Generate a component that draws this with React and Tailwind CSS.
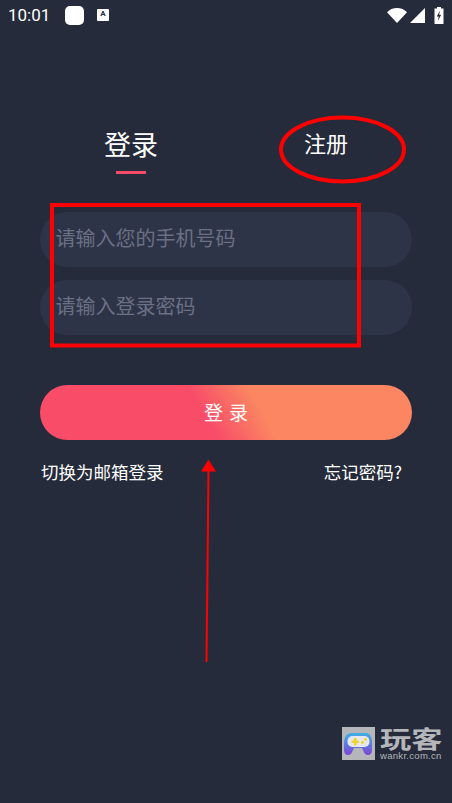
const cjk = { fontFamily: '"Noto Sans CJK SC", "Noto Sans", sans-serif' };

function StatusBar() {
  return (
    <div className="flex h-[30px] items-center justify-between pl-2 pr-2 text-white">
      <div className="flex items-center">
        <span className="w-[43px] text-[17px] leading-none" style={{ fontFamily: 'Roboto, sans-serif' }}>10:01</span>
        <div className="ml-[14px] h-[19px] w-[19px] rounded-[5px] bg-white" />
        <div className="ml-[13px] flex h-3 w-3 items-start justify-center rounded-[1px] bg-white">
          <span className="text-[8px] font-bold leading-[10px] text-[#252b3a]" style={{ fontFamily: 'Roboto, sans-serif' }}>A</span>
        </div>
      </div>
      <div className="flex items-center">
        <svg width="20" height="15" viewBox="0 0 20 15"><path d="M0 4.200C2.600 1.600 6 0 10 0s7.400 1.600 10 4.200L10 15z" fill="#fff" /></svg>
        <svg className="ml-[3px]" width="15" height="15" viewBox="0 0 15 15"><path d="M15 0v15H0z" fill="#fff" /></svg>
        <svg className="ml-[9px]" width="10" height="17" viewBox="0 0 10 17">
          <path fillRule="evenodd" d="M3 0h4v1.500h2.500V17H.5V1.500H3z" fill="#fff" />
          <path d="M6 3.500 2.800 9.500h2l-1 4.500 3.400-6.300H5.100z" fill="#252b3a" />
        </svg>
      </div>
    </div>
  );
}

function Field({ text }) {
  return (
    <div className="flex h-[55px] items-center rounded-full bg-[#2e3447] pb-[3px] pl-4 text-xl text-[#6a7084]">
      <span className="-ml-[0.5px]">{text}</span>
    </div>
  );
}

function Logo() {
  return (
    <div className="absolute left-[342px] top-[727px] flex items-start">
      <div className="flex h-[33px] w-[33px] items-center justify-center bg-[#b4b6ba]">
        <svg width="29" height="24" viewBox="0 0 29 24">
          <defs>
            <linearGradient id="pad" x1="0" y1="0" x2="0" y2="1">
              <stop offset="0" stopColor="#3fb0e6" />
              <stop offset="1" stopColor="#7d45d6" />
            </linearGradient>
          </defs>
          <path d="M7 1h15c4 0 6 4 6 10v7c0 3-1.500 5-4 5s-4-2-5-5l-1-2h-8l-1 2c-1 3-2.500 5-5 5s-4-2-4-5v-7C0 5 3 1 7 1z" fill="url(#pad)" />
          <rect x="3.500" y="4" width="22" height="11" rx="5" fill="#e6e8ee" />
          <path d="M7.500 8.500h2.500V6h2.500v2.500H15V11h-2.500v2.500H10V11H7.500z" fill="#ecd52e" />
          <circle cx="18.500" cy="10.500" r="1.400" fill="#ecd52e" />
          <circle cx="21.500" cy="7.500" r="1.400" fill="#ecd52e" />
        </svg>
      </div>
      <div className="ml-[5px] flex flex-col text-[#b4b6ba]">
        <span className="-mt-[2px] origin-left scale-x-[1.3] whitespace-nowrap text-[24px] font-bold leading-[25px]">玩客</span>
        <span className="mt-[1px] whitespace-nowrap text-[9.5px] leading-[10px] tracking-[0.3px]" style={{ fontFamily: '"Liberation Sans", sans-serif' }}>wankr.com.cn</span>
      </div>
    </div>
  );
}

function Annotations() {
  return (
    <svg className="pointer-events-none absolute left-0 top-0" width="452" height="803" viewBox="0 0 452 803">
      <rect x="52" y="205" width="307" height="140.500" fill="none" stroke="#ff0000" strokeWidth="4" />
      <ellipse cx="342.500" cy="149.500" rx="61.500" ry="32" fill="none" stroke="#ff0000" strokeWidth="4" />
      <path d="M208.500 470 206.500 662" stroke="#ff0000" strokeWidth="2" fill="none" />
      <path d="M208.500 459.500 216 471.500H201z" fill="#ff0000" />
    </svg>
  );
}

export default function App() {
  return (
    <div className="relative h-[803px] w-[452px] overflow-hidden bg-[#252b3a]" style={cjk}>
      <StatusBar />
      <div className="px-10">
        <div className="mt-[93px] flex h-[51px] items-start">
          <div className="flex w-[182px] flex-col items-center">
            <span className="text-[27px] leading-[42px] text-white">登录</span>
            <div className="mt-[6px] h-[3px] w-[30px] bg-[#f44c67]" />
          </div>
          <span className="-mt-[1px] ml-[82px] text-[22px] leading-[40px] text-white">注册</span>
        </div>
        <div className="mt-[38px] flex flex-col gap-[13px]">
          <Field text="请输入您的手机号码" />
          <Field text="请输入登录密码" />
        </div>
        <div className="mt-[50px] flex h-[55px] items-center justify-center rounded-full bg-[linear-gradient(60deg,#f84c69_44%,#fb8661_59%)] pl-[6px] text-[19px] tracking-[6px] text-white">
          登录
        </div>
        <div className="mt-[19px] flex items-center justify-between pl-[1px] pr-[10px] text-[17.5px] leading-[26px] text-white">
          <span>切换为邮箱登录</span>
          <span>忘记密码?</span>
        </div>
      </div>
      <Logo />
      <Annotations />
    </div>
  );
}
